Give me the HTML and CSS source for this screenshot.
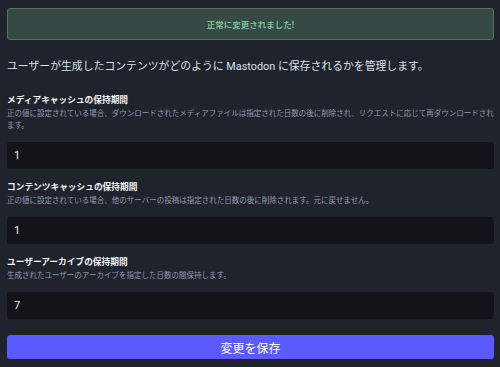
FILE: index.html
```html
<!DOCTYPE html>
<html lang="ja">
<head>
<meta charset="utf-8">
<link rel="stylesheet" href="styles.css">
</head>
<body>
<div class="page">
  <div class="flash">正常に変更されました!</div>
  <p class="lead">ユーザーが生成したコンテンツがどのように Mastodon に保存されるかを管理します。</p>
  <div class="field">
    <div class="label">メディアキャッシュの保持期間</div>
    <div class="hint">正の値に設定されている場合、ダウンロードされたメディアファイルは指定された日数の後に削除され、リクエストに応じて再ダウンロードされます。</div>
    <div class="input">1</div>
  </div>
  <div class="field">
    <div class="label">コンテンツキャッシュの保持期間</div>
    <div class="hint">正の値に設定されている場合、他のサーバーの投稿は指定された日数の後に削除されます。元に戻せません。</div>
    <div class="input">1</div>
  </div>
  <div class="field">
    <div class="label">ユーザーアーカイブの保持期間</div>
    <div class="hint">生成されたユーザーのアーカイブを指定した日数の間保持します。</div>
    <div class="input">7</div>
  </div>
  <div class="button">変更を保存</div>
</div>
</body>
</html>
```

FILE: styles.css
```css
html, body {
  margin: 0;
  padding: 0;
  background: #1f232b;
}
body {
  font-family: Roboto, "Noto Sans CJK JP", sans-serif;
  width: 500px;
  height: 367px;
  overflow: hidden;
}
.page {
  padding: 8px 6px 0 7px;
  display: flex;
  flex-direction: column;
}
.flash {
  height: 32px;
  box-sizing: border-box;
  border: 1px solid #557063;
  background: #354a45;
  border-radius: 3px;
  color: #79bd9a;
  font-size: 8.5px;
  font-weight: 700;
  display: flex;
  align-items: center;
  justify-content: center;
}
.lead {
  margin: 19px 0 19px 0;
  font-size: 10.85px;
  line-height: 16px;
  color: #d9e1e8;
}
.field {
  display: flex;
  flex-direction: column;
  margin-bottom: 12px;
}
.label {
  font-size: 8.7px;
  line-height: 12px;
  font-weight: 700;
  color: #f2f4f7;
  margin-bottom: 2px;
}
.hint {
  font-size: 7.5px;
  line-height: 12px;
  color: #939cae;
  margin-bottom: 10px;
}
.input {
  height: 27px;
  box-sizing: border-box;
  background: #131419;
  border-radius: 3px;
  padding-left: 7px;
  display: flex;
  align-items: center;
  color: #e6e9ee;
  font-size: 11px;
}
.button {
  margin-top: 4px;
  height: 24px;
  background: #595aff;
  border-radius: 3px;
  color: #ffffff;
  font-size: 12px;
  display: flex;
  align-items: center;
  justify-content: center;
}
```
